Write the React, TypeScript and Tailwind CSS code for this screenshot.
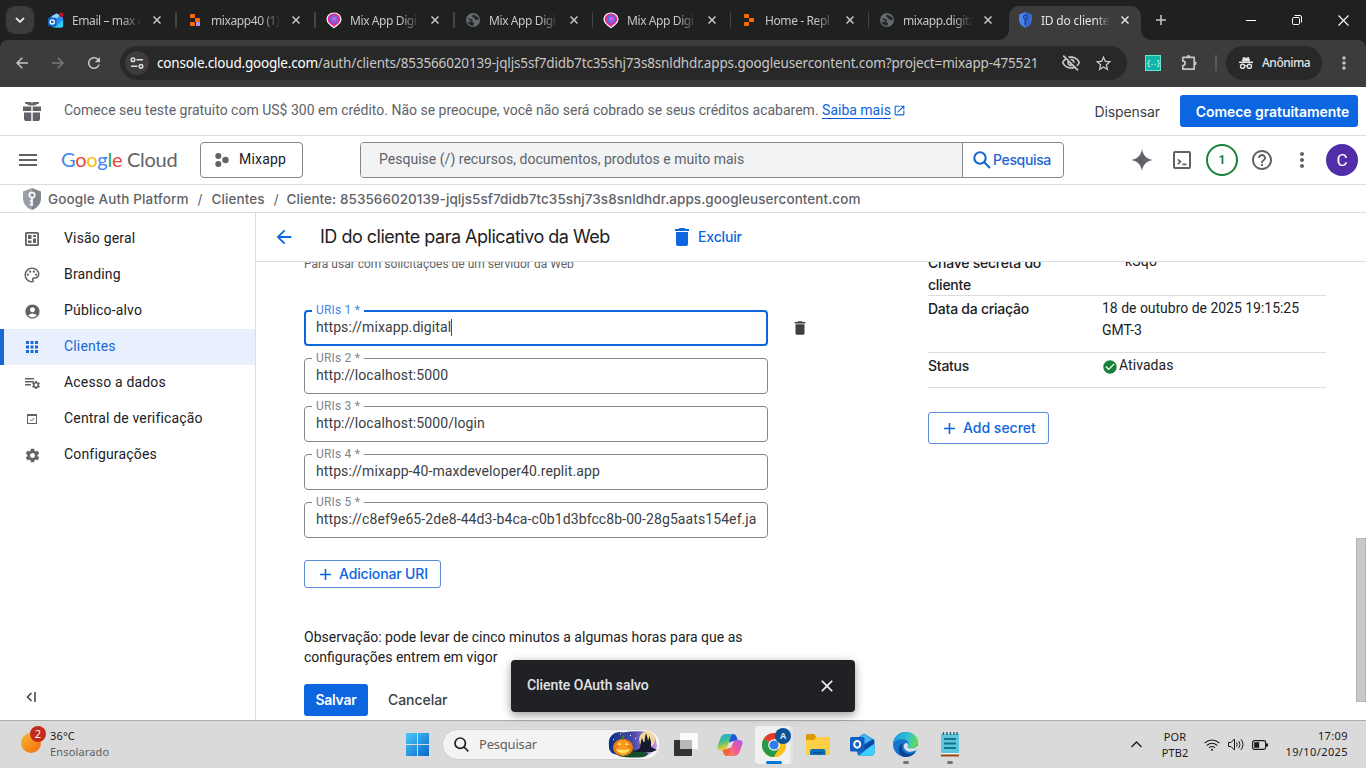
import React from "react";
import {
  MdAccountCircle,
  MdAdd,
  MdApps,
  MdArrowBack,
  MdCheckCircle,
  MdClose,
  MdDelete,
  MdHelpOutline,
  MdMoreVert,
  MdOutlineColorLens,
  MdSettings,
  MdRefresh,
  MdOutlineVisibilityOff,
  MdStarBorder,
  MdOpenInNew,
} from "react-icons/md";

/* ---------- Browser icons ---------- */

function OutlookFavicon() {
  return (
    <svg width="17" height="17" viewBox="0 0 17 17">
      <path d="M2 5 9 .8l7 4.4v8.3A2.5 2.5 0 0 1 13.500 16H5z" fill="#2a8ff0" />
      <path d="M7 16 16 8v6a2 2 0 0 1-2 2z" fill="#2fd0f7" />
      <path d="M4 4 9 1l4 2.500-6 4z" fill="#8fd4fb" />
      <rect x="0" y="5.500" width="9" height="9" rx="1.500" fill="#0f62c8" />
      <circle cx="4.500" cy="10" r="2.200" fill="none" stroke="#fff" strokeWidth="1.400" />
      <circle cx="14" cy="2.400" r="2.400" fill="#c5121f" />
    </svg>
  );
}

function ReplFavicon({ full }: { full?: boolean }) {
  return (
    <svg width="16" height="16" viewBox="0 0 16 16">
      <rect x="3" y="2" width="5" height="4" rx=".8" fill="#fc6a05" />
      <rect x="8" y="6" width="5" height="4" rx=".8" fill="#fc6a05" />
      <rect x="3" y="10" width="5" height="4" rx=".8" fill="#fc6a05" />
      {full && <rect x="9" y="10" width="4" height="4" rx=".6" fill="#a896f5" />}
    </svg>
  );
}

function PinFavicon() {
  return (
    <svg width="16" height="17" viewBox="0 0 16 17">
      <path d="M8 .5c4.400 0 7.500 3 7.500 6.800 0 4.200-5 7-7.500 9.200C5.500 14.300.500 11.500.500 7.300.500 3.500 3.600.5 8 .5z" fill="#fff" />
      <path d="M8 1.600c3.700 0 6.300 2.500 6.300 5.700 0 3.500-4 5.600-6.300 7.700-2.300-2.100-6.300-4.200-6.300-7.700C1.700 4.100 4.300 1.600 8 1.600z" fill="#e62a86" />
      <circle cx="8" cy="7.200" r="4.200" fill="#5a6af0" />
      <circle cx="8.400" cy="7" r="2.400" fill="#e04fb4" />
      <circle cx="8" cy="6.600" r="1.100" fill="#7f8cff" />
    </svg>
  );
}

function GlobeFavicon() {
  return (
    <svg width="16" height="16" viewBox="0 0 16 16">
      <circle cx="8" cy="8" r="7" fill="#66696e" />
      <path d="M2.200 6.200 6 6.800l2 1.400-1 1.600 2 1.200-.6 2.800C5.500 13.800 3 12 2.300 9.500L5 10.200l1-1.200zM8 2.500 7 4.500l1.800 1.200 1.400 1.800 3.300.8-.2-3z" fill="#242625" />
    </svg>
  );
}

function ShieldKey({ size, left, right, keyColor }: { size: number; left: string; right: string; keyColor: string }) {
  return (
    <svg width={size} height={(size * 22) / 18} viewBox="0 0 18 22">
      <path d="M9 0 0 3.500V10c0 6 4 10 9 12z" fill={left} />
      <path d="m9 0 9 3.500V10c0 6-4 10-9 12z" fill={right} />
      <circle cx="9" cy="7" r="2.700" fill="none" stroke={keyColor} strokeWidth="1.700" />
      <path d="M9 9.500V18M9 13H6.800M9 16.500H6.800" stroke={keyColor} strokeWidth="1.700" fill="none" />
    </svg>
  );
}

function SiteInfoIcon() {
  return (
    <svg width="14" height="14" viewBox="0 0 14 14" fill="none" stroke="#dcdcdc" strokeWidth="1.500">
      <circle cx="3" cy="3.800" r="1.800" />
      <path d="M6.500 3.800H13M1 10.200h6.500" />
      <circle cx="11" cy="10.200" r="1.800" />
    </svg>
  );
}

function ExtensionIcon() {
  return (
    <svg className="mb-[2px] ml-[20px]" width="17" height="17" viewBox="0 0 17 17">
      <path
        d="M1.800 3.300H13.200V15.200H1.800V11.600Q4.200 11 4.200 9.200T1.800 6.900z"
        fill="none"
        stroke="#c7c7c7"
        strokeWidth="1.700"
        strokeLinejoin="round"
      />
      <path d="M5.500 3a2 2 0 0 1 4 0zM13.600 7.200a2 2 0 0 1 0 4z" fill="#c7c7c7" />
    </svg>
  );
}

function IncognitoIcon() {
  return (
    <svg width="16" height="16" viewBox="0 0 16 16">
      <path d="M3.800 6.500 5 2l3 .8L11 2l1.200 4.500z" fill="#e3e3e3" />
      <path d="M1 7.300h14" stroke="#e3e3e3" strokeWidth="1.500" />
      <circle cx="4.600" cy="11.300" r="2.100" fill="none" stroke="#e3e3e3" strokeWidth="1.400" />
      <circle cx="11.400" cy="11.300" r="2.100" fill="none" stroke="#e3e3e3" strokeWidth="1.400" />
      <path d="M6.600 11q1.400-.8 2.800 0" fill="none" stroke="#e3e3e3" strokeWidth="1.200" />
    </svg>
  );
}

/* ---------- Browser chrome ---------- */

type TabInfo = { title: string; icon: React.ReactNode; width: string };

const tabs: TabInfo[] = [
  { title: "Email – max d", icon: <OutlookFavicon />, width: "w-[139px]" },
  { title: "mixapp40 (1)", icon: <ReplFavicon full />, width: "w-[139px]" },
  { title: "Mix App Digi", icon: <PinFavicon />, width: "w-[139px]" },
  { title: "Mix App Digi", icon: <GlobeFavicon />, width: "w-[138px]" },
  { title: "Mix App Digi", icon: <PinFavicon />, width: "w-[138px]" },
  { title: "Home - Repl", icon: <ReplFavicon />, width: "w-[138px]" },
  { title: "mixapp.digita", icon: <GlobeFavicon />, width: "w-[138px]" },
];

function CloseGlyph({ color }: { color: string }) {
  return (
    <svg width="8" height="8" viewBox="0 0 8 8" stroke={color} strokeWidth="1.500" className="shrink-0">
      <path d="m.5.500 7 7M7.500.500l-7 7" />
    </svg>
  );
}

function TabStrip() {
  return (
    <div className="flex h-10 bg-[#1f2120] pl-[6px] font-['Noto_Sans',sans-serif]">
      <div className="mt-[6px] flex h-7 w-7 shrink-0 items-center justify-center rounded-[9px] bg-[#3c3c3c]">
        <svg width="10" height="6" viewBox="0 0 10 6" fill="none" stroke="#e3e3e3" strokeWidth="1.800">
          <path d="m1 1 4 4 4-4" />
        </svg>
      </div>
      <div className="flex pl-1">
        {tabs.map((t, i) => (
          <div key={i} className={`flex shrink-0 items-center pl-[10px] ${t.width}`}>
            <span className="flex w-4 shrink-0 justify-center">{t.icon}</span>
            <span className="ml-2 w-[72px] shrink-0 overflow-hidden whitespace-nowrap pt-px text-[12px] tracking-[-0.4px] text-[#c7c7c7] [mask-image:linear-gradient(to_right,black_70%,transparent_97%)]">
              {t.title}
            </span>
            <span className="ml-[9px] flex">
              <CloseGlyph color="#c7c7c7" />
            </span>
            {i < 6 && <span className="ml-[14px] h-4 w-[2px] bg-[#444645]" />}
          </div>
        ))}
      </div>
      <div className="relative ml-[2px] mt-[6px] flex h-[34px] w-[132px] shrink-0 items-center rounded-t-[10px] bg-[#3c3c3c] pb-[6px] pl-2">
        <span className="absolute -left-[10px] bottom-0 h-[10px] w-[10px] bg-[radial-gradient(circle_at_0_0,#1f2120_9.500px,#3c3c3c_10px)]" />
        <span className="absolute -right-[10px] bottom-0 h-[10px] w-[10px] bg-[radial-gradient(circle_at_100%_0,#1f2120_9.500px,#3c3c3c_10px)]" />
        <span className="flex w-4 justify-center">
          <ShieldKey size={13} left="#4a82ee" right="#3567d6" keyColor="#1d3f94" />
        </span>
        <span className="ml-2 w-[69px] overflow-hidden whitespace-nowrap pt-px text-[12px] tracking-[-0.2px] text-[#e3e3e3] [mask-image:linear-gradient(to_right,black_80%,transparent)]">
          ID do cliente
        </span>
        <span className="ml-[11px] flex">
          <CloseGlyph color="#e3e3e3" />
        </span>
      </div>
      <div className="ml-[15px] flex items-center">
        <svg width="10" height="10" viewBox="0 0 10 10" stroke="#c7c7c7" strokeWidth="1.500">
          <path d="M5 0v10M0 5h10" />
        </svg>
      </div>
      <div className="ml-auto flex items-center">
        <span className="flex w-[46px] justify-center">
          <span className="h-px w-[10px] bg-white" />
        </span>
        <span className="flex w-[46px] justify-center">
          <svg width="10" height="10" viewBox="0 0 10 10" fill="none" stroke="#fff" strokeWidth="1">
            <rect x=".5" y="2.500" width="7" height="7" rx="1.200" />
            <path d="M2.500 .5H8A1.500 1.500 0 0 1 9.500 2v5.500" />
          </svg>
        </span>
        <span className="flex w-[46px] justify-center">
          <svg width="11" height="11" viewBox="0 0 11 11" stroke="#fff" strokeWidth="1.100">
            <path d="m.5.500 10 10M10.500.500l-10 10" />
          </svg>
        </span>
      </div>
    </div>
  );
}

function Toolbar() {
  return (
    <div className="bg-[#1f2120]">
      <div className="flex h-[47px] items-center rounded-t-lg bg-[#3c3c3c] pb-px font-['Noto_Sans',sans-serif]">
        <svg className="ml-4" width="12" height="12" viewBox="0 0 12 12" fill="none" stroke="#c7c7c7" strokeWidth="1.500">
          <path d="M12 6H1M6.300.700 1 6l5.300 5.300" />
        </svg>
        <svg className="ml-6" width="12" height="12" viewBox="0 0 12 12" fill="none" stroke="#7a7a7a" strokeWidth="1.500">
          <path d="M0 6h11M5.700.700 11 6l-5.300 5.300" />
        </svg>
        <MdRefresh className="ml-[21px] text-[#c7c7c7]" size={18} />
        <div className="ml-[17px] flex h-[34px] w-[1007px] items-center rounded-full bg-[#282828] pl-[5px]">
          <span className="flex h-6 w-6 items-center justify-center rounded-full bg-[#3c3c3c]">
            <SiteInfoIcon />
          </span>
          <span className="ml-2 w-[884px] whitespace-nowrap text-[13.5px] tracking-[-0.147px] text-[#c7c7c7]">
            <span className="tracking-[-0.2px] text-white">console.cloud.google.com</span>
            /auth/clients/853566020139-jqljs5sf7didb7tc35shj73s8snldhdr.apps.googleusercontent.com?project=mixapp-475521
          </span>
          <MdOutlineVisibilityOff className="ml-[20px] shrink-0 text-[#c7c7c7]" size={20} />
          <MdStarBorder className="ml-[13px] shrink-0 text-[#c7c7c7]" size={19} />
        </div>
        <span className="ml-[18px] flex h-4 w-4 items-center justify-center border border-[#5eead4] bg-[#0fb5a5] font-['Liberation_Mono',monospace] text-[7px] tracking-[-1px] text-white">
          {"{..}"}
        </span>
        <ExtensionIcon />
        <span className="ml-[17px] h-4 w-[2px] bg-[#5a5a5a]" />
        <span className="ml-[9px] flex h-[34px] w-[96px] items-center rounded-full bg-[#282828] pl-3">
          <IncognitoIcon />
          <span className="ml-2 text-[12px] font-medium tracking-[-0.5px] text-[#e3e3e3]">Anônima</span>
        </span>
        <MdMoreVert className="ml-3 text-[#c7c7c7]" size={20} />
      </div>
    </div>
  );
}

/* ---------- Console header ---------- */

function Banner() {
  return (
    <div className="flex h-[49px] items-center border-b border-[#dadce0] pl-[23px] pr-2">
      <svg width="18" height="19" viewBox="0 0 18 19" fill="#5f6368">
        <path d="M2 0h6l1 1.500L10 0h6v1.500L11 3.500H7L2 1.500z" />
        <path d="M0 4.500h8.300V9H0zM9.700 4.500H18V9H9.700zM1 10.500h7.300V19H3a2 2 0 0 1-2-2zM9.700 10.500H17V17a2 2 0 0 1-2 2H9.700z" />
      </svg>
      <p className="ml-[23px] whitespace-nowrap pb-[2px] text-[14px] text-[#5f6368]">
        Comece seu teste gratuito com US$ 300 em crédito. Não se preocupe, você não será cobrado se seus créditos
        acabarem. <span className="border-b border-[#0b57d0] text-[#0b62dc]">Saiba mais</span>
      </p>
      <MdOpenInNew className="mb-[2px] ml-[2px] text-[#0b62dc]" size={13} />
      <span className="ml-auto font-['Inter',sans-serif] text-[14px] tracking-[-0.1px] text-[#3c4043]">Dispensar</span>
      <button className="ml-5 h-8 w-[178px] rounded-[3px] bg-[#0b66e0] pl-[7px] font-['Inter',sans-serif] text-[14px] font-semibold tracking-[-0.05px] text-white">
        Comece gratuitamente
      </button>
    </div>
  );
}

function GoogleCloudLogo() {
  return (
    <div className="ml-6 w-[118px] whitespace-nowrap pb-[2px] font-['Lato',sans-serif] text-[20px] leading-6 tracking-[-0.28px]">
      <span className="text-[#4285f4]">G</span>
      <span className="text-[#ea4335]">o</span>
      <span className="text-[#fbbc05]">o</span>
      <span className="text-[#4285f4]">g</span>
      <span className="text-[#34a853]">l</span>
      <span className="text-[#ea4335]">e</span>
      <span className="text-[#5f6368]"> Cloud</span>
    </div>
  );
}

function Header() {
  return (
    <div className="flex h-[49px] items-center border-b border-[#dadce0] pl-[19px] pr-2">
      <svg width="18" height="12" viewBox="0 0 18 12" fill="#5f6368">
        <path d="M0 0h18v2H0zM0 5h18v2H0zM0 10h18v2H0z" />
      </svg>
      <GoogleCloudLogo />
      <button className="ml-[21px] flex h-9 w-[103px] items-center rounded-[4px] border border-[#80868b] pl-[14px] text-[14px] tracking-[0.2px] text-[#202124]">
        <svg width="14" height="14" viewBox="0 0 14 14" fill="#5f6368">
          <circle cx="3.300" cy="3" r="3" />
          <circle cx="10.500" cy="7" r="3.200" />
          <circle cx="3.300" cy="11" r="3" />
        </svg>
        <span className="ml-[10px] pb-[2px]">Mixapp</span>
      </button>
      <div className="ml-[57px] flex h-9 w-[704px] overflow-hidden rounded-[4px] border border-[#80868b]">
        <div className="flex w-[602px] items-center border-r border-[#80868b] bg-[#f1f3f4] pb-[2px] pl-[18px] text-[14px] tracking-[0.02px] text-[#5f6368]">
          Pesquise (/) recursos, documentos, produtos e muito mais
        </div>
        <div className="flex items-center pl-[10px] text-[#1a67d2]">
          <svg width="18" height="18" viewBox="0 0 18 18" fill="none" stroke="#1a67d2" strokeWidth="2.100">
            <circle cx="7" cy="7" r="5.700" />
            <path d="m11 11 6 6" />
          </svg>
          <span className="ml-[2px] pb-px font-['Inter',sans-serif] text-[14px] font-medium tracking-[-0.35px]">Pesquisa</span>
        </div>
      </div>
      <div className="ml-auto flex items-center text-[#5f6368]">
        <svg width="22" height="22" viewBox="0 0 22 22" fill="#5f6368">
          <path d="M11 0c1 6.500 4.500 10 11 11-6.500 1-10 4.500-11 11C10 15.500 6.500 12 0 11 6.500 10 10 6.500 11 0z" />
        </svg>
        <svg className="ml-5" width="18" height="18" viewBox="0 0 18 18" fill="none" stroke="#5f6368" strokeWidth="2">
          <rect x="1" y="1" width="16" height="16" rx="1" />
          <path d="m4.800 8.300 2.700 2.400-2.700 2.400M9.500 13.300h4" strokeWidth="1.700" />
        </svg>
        <span className="ml-[15px] flex h-8 w-8 items-center justify-center rounded-full border-2 border-[#188038] text-[12px] font-bold text-[#188038]">
          1
        </span>
        <MdHelpOutline className="ml-3" size={24} />
        <MdMoreVert className="ml-4" size={24} />
        <span className="ml-3 flex h-8 w-8 items-center justify-center rounded-full bg-[#512da8] pt-px text-[17px] text-white">
          C
        </span>
      </div>
    </div>
  );
}

function Breadcrumb() {
  return (
    <div className="flex h-7 items-center border-b border-[#dadce0] pl-[23px] font-['Inter',sans-serif] text-[13.5px] font-medium text-[#5f6368]">
      <ShieldKey size={18} left="#9aa0a6" right="#80868b" keyColor="#ffffff" />
      <span className="ml-[7px] pt-[2px] tracking-[0.13px]">Google Auth Platform</span>
      <span className="mx-[9px] pt-[2px] font-normal">/</span>
      <span className="pt-[2px] tracking-[0.1px]">Clientes</span>
      <span className="ml-[9px] mr-[8px] pt-[2px] font-normal">/</span>
      <span className="pt-[2px] tracking-[0.06px]">
        Cliente: 853566020139-jqljs5sf7didb7tc35shj73s8snldhdr.apps.googleusercontent.com
      </span>
    </div>
  );
}

/* ---------- Sidebar ---------- */

const nav: { label: string; icon: React.ReactNode; active?: boolean }[] = [
  {
    label: "Visão geral",
    icon: (
      <svg width="14" height="14" viewBox="0 0 14 14" fill="none" stroke="#5f6368">
        <rect x=".9" y=".9" width="12.200" height="12.200" rx=".6" strokeWidth="1.800" />
        <path d="M3 3h3.500v4H3zM8 3h3v2H8zM8 6.500h3V11H8zM3 8.500h3.500V11H3z" fill="#5f6368" stroke="none" />
      </svg>
    ),
  },
  { label: "Branding", icon: <MdOutlineColorLens size={18} /> },
  { label: "Público-alvo", icon: <MdAccountCircle size={17} /> },
  { label: "Clientes", icon: <MdApps size={18} />, active: true },
  {
    label: "Acesso a dados",
    icon: (
      <span className="relative flex h-4 w-4">
        <svg width="16" height="16" viewBox="0 0 16 16" fill="#5f6368">
          <path d="M1 3h9v1.500H1zM1 6h9v1.500H1zM1 9h6v1.500H1z" />
        </svg>
        <MdSettings className="absolute left-[7px] top-[5px]" size={10} />
      </span>
    ),
  },
  {
    label: "Central de verificação",
    icon: (
      <svg width="10" height="10" viewBox="0 0 10 10" fill="none" stroke="#5f6368">
        <rect x=".5" y=".5" width="9" height="9" />
        <path d="M0 1h10" strokeWidth="2" />
        <path d="m3 5.500 1.400 1.500L7.300 4" />
      </svg>
    ),
  },
  { label: "Configurações", icon: <MdSettings size={17} /> },
];

function Sidebar() {
  return (
    <div className="flex w-64 shrink-0 flex-col border-r border-[#dadce0] pt-2">
      {nav.map((n) => (
        <div
          key={n.label}
          className={
            n.active
              ? "flex h-9 items-center border-l-4 border-[#1967d2] bg-[#e8f0fe] pl-[18px] text-[#1967d2]"
              : "flex h-9 items-center pl-[22px] text-[#5f6368]"
          }
        >
          <span className="flex w-5 justify-center">{n.icon}</span>
          <span
            className={
              n.active
                ? "ml-[22px] pb-[2px] text-[14px] tracking-[0.17px] text-[#1967d2]"
                : "ml-[22px] pb-[2px] text-[14px] tracking-[0.17px] text-[#202124]"
            }
          >
            {n.label}
          </span>
        </div>
      ))}
      <svg className="mb-[18px] ml-[26px] mt-auto" width="10" height="10" viewBox="0 0 10 10" fill="none" stroke="#3c4043" strokeWidth="1.500">
        <path d="M5.500 1 1.500 5l4 4M9 0v10" />
      </svg>
    </div>
  );
}

/* ---------- Main panel ---------- */

const uris = [
  "https://mixapp.digital",
  "http://localhost:5000",
  "http://localhost:5000/login",
  "https://mixapp-40-maxdeveloper40.replit.app",
  "https://c8ef9e65-2de8-44d3-b4ca-c0b1d3bfcc8b-00-28g5aats154ef.ja",
];

function UriField({ index, value }: { index: number; value: string }) {
  const focused = index === 1;
  return (
    <div
      className={
        focused
          ? "relative flex h-9 w-[464px] items-center rounded-[4px] border-2 border-[#0b66e0] px-[10px]"
          : "relative flex h-9 w-[464px] items-center rounded-[4px] border border-[#80868b] px-[11px]"
      }
    >
      <span
        className={
          focused
            ? "absolute -top-[9px] left-[6px] w-[52px] bg-white pl-1 text-[12px] leading-[14px] tracking-[0.2px] text-[#4285e8]"
            : "absolute -top-[8px] left-[7px] w-[52px] bg-white pl-1 text-[12px] leading-[14px] tracking-[0.2px] text-[#80868b]"
        }
      >
        URIs {index} *
      </span>
      <span className="whitespace-nowrap pb-[2px] text-[14px] tracking-[0.09px] text-[#3c4043]">{value}</span>
      {focused && <span className="-mt-px h-[17px] w-px bg-[#0b57d0]" />}
    </div>
  );
}

function ClientForm() {
  return (
    <div className="w-[512px] shrink-0">
      <p className="-mt-[6px] text-[12px] leading-4 text-[#5f6368]">Para usar com solicitações de um servidor da Web</p>
      <div className="mt-[38px] flex flex-col gap-3">
        {uris.map((u, i) => (
          <div key={u} className="flex items-center">
            <UriField index={i + 1} value={u} />
            {i === 0 && <MdDelete className="ml-[23px] text-[#3c4043]" size={18} />}
          </div>
        ))}
      </div>
      <button className="mt-[22px] flex h-7 w-[137px] items-center rounded-[3px] border border-[#5a8ad8] pl-[11px] font-['Inter',sans-serif] text-[14px] font-medium text-[#0b66e0]">
        <MdAdd size={19} />
        <span className="ml-1 whitespace-nowrap pb-px tracking-[-0.15px]">Adicionar URI</span>
      </button>
      <p className="mt-[39px] w-[450px] text-[14px] leading-5 tracking-[0px] text-[#202124]">
        Observação: pode levar de cinco minutos a algumas horas para que as
        <br />
        configurações entrem em vigor
      </p>
      <div className="mt-[17px] flex items-center font-['Inter',sans-serif] text-[14px]">
        <button className="h-8 w-16 rounded-[3px] bg-[#0b66e0] pb-px font-semibold tracking-[-0.25px] text-white">Salvar</button>
        <span className="ml-[20px] pb-px font-medium tracking-[-0.05px] text-[#3c4043]">Cancelar</span>
      </div>
    </div>
  );
}

function SecretDetails() {
  return (
    <div className="ml-[112px] w-[398px] shrink-0 text-[14px] leading-[22px] text-[#202124]">
      <div className="-mt-[11px] flex h-[45px] border-b border-[#dadce0]">
        <div className="w-[174px] pt-px font-['Inter',sans-serif] font-medium tracking-[-0.25px]">
          Chave secreta do
          <br />
          cliente
        </div>
        <div className="-mt-px pl-[23px] tracking-[0.2px]">kSqo</div>
      </div>
      <div className="flex h-[57px] border-b border-[#dadce0]">
        <div className="w-[174px] pt-[2px] font-['Inter',sans-serif] font-medium tracking-[-0.25px]">Data da criação</div>
        <div className="w-[205px] pt-[1px] tracking-[-0.02px]">
          18 de outubro de 2025 19:15:25
          <br />
          GMT-3
        </div>
      </div>
      <div className="flex h-[35px] border-b border-[#dadce0]">
        <div className="w-[174px] pt-[2px] font-['Inter',sans-serif] font-medium tracking-[-0.25px]">Status</div>
        <div className="flex h-6 items-center tracking-[0.05px]">
          <MdCheckCircle className="mr-px mt-[3px] text-[#188038]" size={16} />
          Ativadas
        </div>
      </div>
      <button className="mt-6 flex h-8 w-[121px] items-center rounded-[3px] border border-[#5a8ad8] pl-[11px] font-['Inter',sans-serif] font-medium text-[#0b66e0]">
        <MdAdd size={19} />
        <span className="ml-1 whitespace-nowrap">Add secret</span>
      </button>
    </div>
  );
}

function MainPanel() {
  return (
    <div className="flex min-w-0 flex-1 flex-col">
      <div className="flex h-[49px] shrink-0 items-center border-b border-[#dadce0] pl-[17px] font-['Inter',sans-serif]">
        <MdArrowBack className="text-[#0b66e0]" size={22} />
        <h1 className="ml-[25px] w-[291px] whitespace-nowrap pb-px text-[18px] tracking-[-0.49px] text-[#202124]">
          ID do cliente para Aplicativo da Web
        </h1>
        <MdDelete className="ml-[59px] text-[#0b66e0]" size={24} />
        <span className="ml-1 pb-px text-[14px] font-medium tracking-[-0.15px] text-[#0b66e0]">Excluir</span>
      </div>
      <div className="flex min-h-0 flex-1 overflow-hidden pl-12">
        <ClientForm />
        <SecretDetails />
        <div className="ml-auto mt-[276px] h-[164px] w-[10px] border border-[#b4b4b4] bg-[#c8c8c8]" />
      </div>
    </div>
  );
}

function Snackbar() {
  return (
    <div className="absolute left-[511px] top-[660px] flex h-[52px] w-[344px] items-center justify-between rounded-[4px] bg-[#202124] pl-4 pr-[18px] shadow-[0_3px_10px_rgba(0,0,0,0.4)]">
      <span className="pb-[2px] text-[14px] font-medium tracking-[-0.06px] text-[#e3e3e6]">Cliente OAuth salvo</span>
      <MdClose className="text-[#f1f3f4]" size={20} />
    </div>
  );
}

/* ---------- Windows taskbar ---------- */

function WindowsLogo() {
  return (
    <svg width="23" height="23" viewBox="0 0 23 23">
      <defs>
        <linearGradient id="win" x1="0" y1="0" x2="1" y2="1">
          <stop offset="0" stopColor="#4cc9fb" />
          <stop offset="1" stopColor="#0768c8" />
        </linearGradient>
      </defs>
      <path d="M0 0h11v11H0zM12 0h11v11H12zM0 12h11v11H0zM12 12h11v11H12z" fill="url(#win)" />
    </svg>
  );
}

function HalloweenArt() {
  return (
    <svg width="50" height="27" viewBox="0 0 50 27">
      <defs>
        <linearGradient id="sky" x1="0" x2="1">
          <stop offset="0" stopColor="#0c2f86" />
          <stop offset=".5" stopColor="#4a4aa8" />
          <stop offset="1" stopColor="#c795e6" />
        </linearGradient>
      </defs>
      <path d="M4 4Q8 0 15 1.500 28-.5 40 1q8 3 8 10 3 6-3 9-3 5-14 5-12 2-20-1-11-1-10-9-1-7 3-11z" fill="url(#sky)" />
      <circle cx="39" cy="8.500" r="8" fill="#f3d79a" />
      <path d="M7 22q14-7 33 0 0 5-13 4.500Q10 27 7 22z" fill="#174f2e" />
      <path d="m26 21 6-4 1-7 1-3 1.500 4h1l.5-5 1-4 1.500 5 .5 3 1.500-5 1.500 6v5l6 3-5 2z" fill="#161a2f" />
      <ellipse cx="15" cy="16.500" rx="10" ry="8.500" fill="#f07d12" />
      <ellipse cx="15" cy="16.500" rx="4.500" ry="8.500" fill="#fb9b22" />
      <path d="M15 9q-1-3 1-4.500" stroke="#4f7a1f" strokeWidth="2" fill="none" />
      <path d="m9 14 2-3 2 3zM17 14l2-3 2 3zM8 17.500q7 3 14 0-1.500 5-7 5t-7-5z" fill="#ffe45e" />
      <path d="M12 2.500h1v1h-1zM22 4h1v1h-1zM27 7h1v1h-1zM5 8h1v1H5z" fill="#fff" />
    </svg>
  );
}

function TaskViewIcon() {
  return (
    <svg width="24" height="23" viewBox="0 0 24 23">
      <rect x="0" y="7" width="18" height="16" rx="1" fill="#333" />
      <rect x="6" y="0" width="18" height="16" rx="1" fill="#fafafa" />
      <rect x="6" y="7" width="12" height="9" fill="#b9b9b9" />
    </svg>
  );
}

function CopilotIcon() {
  return (
    <svg width="26" height="24" viewBox="0 0 26 24">
      <defs>
        <linearGradient id="cpA" x1="0" y1="0" x2=".3" y2="1">
          <stop offset="0" stopColor="#22a7f2" />
          <stop offset=".5" stopColor="#3cc08a" />
          <stop offset="1" stopColor="#f4cf2a" />
        </linearGradient>
        <linearGradient id="cpB" x1="1" y1="0" x2="0" y2="1">
          <stop offset="0" stopColor="#a45cf0" />
          <stop offset=".5" stopColor="#f0569c" />
          <stop offset="1" stopColor="#fb8b4a" />
        </linearGradient>
      </defs>
      <path d="M10 1h6q3 0 4 4l1 3h-5q-2 0-3 3z" fill="#1d55dc" />
      <path d="M16 23h-6q-3 0-4-4l-1-3h5q2 0 3-3z" fill="#f2643a" />
      <path d="M9 1h7q-2 1-3 5l-3 8q-1 3-4 3H4q-5 0-3-5l2.500-7Q5 1 9 1z" fill="url(#cpA)" />
      <path d="M17 23h-7q2-1 3-5l3-8q1-3 4-3h2q5 0 3 5l-2.500 7Q21 23 17 23z" fill="url(#cpB)" />
      <path d="m13 9-2 6h2l2-6z" fill="#e6e6e6" />
    </svg>
  );
}

function ChromeIcon() {
  return (
    <svg width="24" height="24" viewBox="0 0 24 24">
      <circle cx="12" cy="12" r="12" fill="#fbc116" />
      <path d="M12 12 1.600 6A12 12 0 0 1 22.400 6z" fill="#e33b2e" />
      <path d="M12 12 1.600 6A12 12 0 0 0 12 24l5.200-9z" fill="#229a4a" />
      <path d="M12 6h10.400A12 12 0 0 1 12 24l5.200-9z" fill="#fbc116" />
      <circle cx="12" cy="12" r="5.800" fill="#fff" />
      <circle cx="12" cy="12" r="4.600" fill="#2f7de9" />
    </svg>
  );
}

function FolderIcon() {
  return (
    <svg width="24" height="22" viewBox="0 0 24 22">
      <path d="M0 1.500Q0 0 1.500 0H8l2.500 3v4H0z" fill="#dc9a06" />
      <path d="M0 6h8l2.500-3H22.500Q24 3 24 4.500V20q0 1-1.500 1h-21Q0 21 0 20z" fill="#fdcf44" />
      <path d="M4 21v-4q0-2 2-2h11.500q2 0 2 2v4z" fill="#0f6fbd" />
      <path d="M7 18h10v1.200H7z" fill="#0a4e8c" />
    </svg>
  );
}

function OutlookIcon() {
  return (
    <svg width="25" height="23" viewBox="0 0 25 23">
      <path d="M4 7 14 .5 24.500 7v12.500q0 3-3 3H8z" fill="#1b6fd0" />
      <path d="m8 5 6-4 8 5-9 6z" fill="#49b7f2" />
      <path d="M24.500 10v9.500q0 3-3 3H9z" fill="#39d0fb" />
      <path d="M12 13 24 6.500V11L13 18z" fill="#0d47a1" />
      <rect x="0" y="4" width="14.500" height="14.500" rx="1.600" fill="#0f5fc4" />
      <ellipse cx="7.200" cy="11.300" rx="3" ry="3.400" fill="none" stroke="#fff" strokeWidth="2" />
    </svg>
  );
}

function EdgeIcon() {
  return (
    <svg width="25" height="25" viewBox="0 0 24 24">
      <defs>
        <linearGradient id="edgeTop" x1="0" y1=".3" x2="1" y2=".5">
          <stop offset="0" stopColor="#1b9ee8" />
          <stop offset=".6" stopColor="#34c1c8" />
          <stop offset="1" stopColor="#66df4e" />
        </linearGradient>
      </defs>
      <circle cx="12" cy="12" r="12" fill="#1275d0" />
      <path d="M.2 10.500C1.500 4 6.500 0 12.500 0 19 0 24 4.500 24 10c0 4-3 6-6.500 6-3 0-4-1.200-3.500-2.500 2-3.500-.5-6.500-4.500-6.500C5 7 1.500 8.500.200 10.500z" fill="url(#edgeTop)" />
      <path d="M9.500 11c-3 4.500 1 10.500 6.500 10.200 3-.1 5-1.500 6.200-2.700C20 22 16.500 24 12.500 24 7 23.500 5 19 5.500 15.500 6 12.500 8 11 9.500 11z" fill="#123f8f" />
      <path d="M12.500 10.500c-2.500 1-3 4-1 6.200 2.800 3 7.800 2.800 11.800.1l1.200-4.300-3 2.600c-3 1.300-7 1.100-7.500-.6-.2-1 .6-1.500.3-2.600-.2-.9-.9-1.400-1.800-1.400z" fill="#dde3e8" />
    </svg>
  );
}

function NotepadIcon() {
  return (
    <svg width="18" height="25" viewBox="0 0 18 25">
      <path d="M0 2h18v19H0z" fill="#5cc7dc" />
      <path d="M2.500 0v3M6 0v3M9.500 0v3M13 0v3M16 0v3" stroke="#1a5d7d" strokeWidth="1.300" />
      <path d="M3 7h12M3 11.500h12M3 16h12" stroke="#16708f" strokeWidth="1.800" />
      <path d="M0 21h18v1.200H0z" fill="#f2f2f2" />
      <path d="M0 22.500h18V24.500H0z" fill="#9a4a10" />
    </svg>
  );
}

function Taskbar() {
  return (
    <div className="flex h-12 shrink-0 items-center border-t border-[#ababab] bg-[#dadada] font-['Noto_Sans',sans-serif] text-[#1b1b1b]">
      <div className="flex w-[405px] items-center pl-[21px]">
        <div className="relative h-6 w-6">
          <span className="absolute left-0 top-0 h-5 w-5 rounded-full bg-gradient-to-br from-[#f4b92e] to-[#f4650b]" />
          <span className="absolute -top-[7px] left-[9px] flex h-4 w-4 items-center justify-center rounded-full bg-[#c42b1c] text-[11px] leading-none text-white">
            2
          </span>
        </div>
        <div className="ml-[5px] pb-[2px] text-[11px] leading-4 tracking-[0.15px]">
          <div>36°C</div>
          <div className="text-[#5d5d5d]">Ensolarado</div>
        </div>
      </div>
      <span className="flex w-[37px] pl-px">
        <WindowsLogo />
      </span>
      <div className="flex h-[31px] w-[219px] items-center rounded-full border border-[#cfcfcf] bg-[#f3f3f3] pl-[11px]">
        <svg width="15" height="15" viewBox="0 0 15 15" fill="none" stroke="#222" strokeWidth="1.700">
          <circle cx="6.200" cy="6.200" r="5.200" />
          <path d="m10 10 4.300 4.300" />
        </svg>
        <span className="ml-[10px] text-[13px] tracking-[-0.2px] text-[#5f5f5f]">Pesquisar</span>
        <span className="ml-auto mr-[2px]">
          <HalloweenArt />
        </span>
      </div>
      <span className="ml-[13px]">
        <TaskViewIcon />
      </span>
      <span className="ml-[19px]">
        <CopilotIcon />
      </span>
      <div className="relative ml-[12px] flex h-[38px] w-[38px] justify-center rounded-[4px] border-r-[3px] border-[#e4e4e4] bg-[#f0f0f0] pl-[2px] pt-[7px]">
        <ChromeIcon />
        <span className="absolute left-[20px] top-[2px] flex h-4 w-4 items-center justify-center rounded-full bg-[#0b5394] text-[9px] font-bold text-[#cfe4ff]">
          A
        </span>
        <span className="absolute bottom-0 left-[11px] h-[3px] w-4 rounded-full bg-[#0078d4]" />
      </div>
      <span className="ml-[13px]">
        <FolderIcon />
      </span>
      <span className="ml-[20px]">
        <OutlookIcon />
      </span>
      <div className="relative ml-[18px]">
        <EdgeIcon />
        <span className="absolute -bottom-[7px] left-[10px] h-[3px] w-[6px] rounded-full bg-[#777]" />
      </div>
      <div className="relative ml-[23px]">
        <NotepadIcon />
        <span className="absolute -bottom-[7px] left-[6px] h-[3px] w-[6px] rounded-full bg-[#777]" />
      </div>
      <div className="ml-auto flex items-center pr-[18px] text-[11px] leading-4">
        <svg width="11" height="7" viewBox="0 0 11 7" fill="none" stroke="#1b1b1b" strokeWidth="1.300">
          <path d="m.5 6 5-5 5 5" />
        </svg>
        <div className="ml-[18px] w-[30px] whitespace-nowrap text-center tracking-[0.1px]">
          <div>POR</div>
          <div>PTB2</div>
        </div>
        <svg className="ml-[14px]" width="16" height="12" viewBox="0 0 16 12" fill="none" stroke="#1b1b1b" strokeWidth="1.100">
          <path d="M.5 4.200q7.500-6.500 15 0M2.800 6.500q5.200-4.600 10.400 0M5 8.800q3-2.600 6 0" />
          <circle cx="8" cy="10.700" r="1" fill="#1b1b1b" stroke="none" />
        </svg>
        <svg className="ml-2" width="17" height="13" viewBox="0 0 17 13" fill="none" stroke="#1b1b1b" strokeWidth="1">
          <path d="M.5 4.500h2.500L6.500 1v11L3 8.500H.500zM8.500 4.500q1.500 2 0 4M10.700 3q2.600 3.500 0 7M13 1.200q4 5.300 0 10.600" />
        </svg>
        <svg className="ml-[7px]" width="17" height="10" viewBox="0 0 17 10" fill="none" stroke="#1b1b1b" strokeWidth="1.200">
          <rect x=".6" y=".6" width="13" height="8.800" rx="1.800" />
          <path d="M2.200 2.200h5v5.600h-5z" fill="#1b1b1b" stroke="none" />
          <path d="M15 3.500v3" strokeWidth="2" />
        </svg>
        <div className="ml-[16px] w-[63px] whitespace-nowrap pb-[2px] text-right tracking-[0.4px]">
          <div>17:09</div>
          <div>19/10/2025</div>
        </div>
      </div>
    </div>
  );
}

export default function App() {
  return (
    <div className="relative flex h-[768px] w-[1366px] flex-col overflow-hidden bg-white font-['Roboto',sans-serif]">
      <TabStrip />
      <Toolbar />
      <Banner />
      <Header />
      <Breadcrumb />
      <div className="flex min-h-0 flex-1">
        <Sidebar />
        <MainPanel />
      </div>
      <Taskbar />
      <Snackbar />
    </div>
  );
}
